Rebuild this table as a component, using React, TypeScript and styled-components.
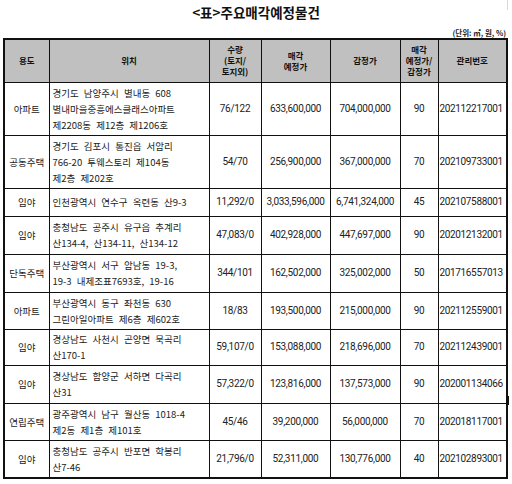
import styled, { createGlobalStyle } from "styled-components";

const GlobalStyle = createGlobalStyle`
  html, body {
    margin: 0;
    padding: 0;
    background: #fff;
  }
  body {
    font-family: "Noto Sans CJK KR", "Noto Sans", sans-serif;
    color: #1a1a1a;
  }
`;

const Page = styled.div`
  position: relative;
  width: 512px;
  height: 484px;
  overflow: hidden;
`;

const Title = styled.h1`
  margin: 0;
  padding-top: 3px;
  height: 24px;
  text-align: center;
  font-size: 13.5px;
  line-height: 18px;
  font-weight: 700;
  color: #111;
`;

const UnitNote = styled.div`
  height: 11px;
  padding-right: 6px;
  text-align: right;
  font-size: 7.5px;
  line-height: 11px;
  font-weight: 700;
  color: #222;
`;

const Table = styled.table`
  margin-left: 3px;
  width: 503px;
  table-layout: fixed;
  border-collapse: collapse;
  border: 2px solid #111;
`;

const HeadCell = styled.th`
  background: #c0c0c0;
  border: 1px solid #111;
  padding: 0;
  text-align: center;
  vertical-align: middle;
  font-size: 8.5px;
  line-height: 11px;
  font-weight: 700;
  color: #111;
`;

const Row = styled.tr<{ $h: number }>`
  height: ${(p) => p.$h}px;
`;

const Cell = styled.td<{ $align?: string; $num?: boolean }>`
  border: 1px solid #111;
  padding: ${(p) => (p.$align === "left" ? "0 0 0 3px" : "0")};
  text-align: ${(p) => p.$align || "center"};
  vertical-align: middle;
  white-space: nowrap;
  overflow: visible;
  color: #222;
  ${(p) =>
    p.$num
      ? `font-family: Roboto, "Noto Sans", sans-serif;
         font-size: 10px;
         letter-spacing: -0.3px;`
      : `font-size: 9.5px;
         word-spacing: 3px;`}
  line-height: 16px;
`;

const IdCell = styled(Cell)`
  text-align: left;
  padding-left: 1px;
  letter-spacing: -0.35px;
`;

const Tick = styled.div`
  position: absolute;
  left: 507px;
  top: 396px;
  width: 2px;
  height: 9px;
  background: #111;
`;

const EdgeLine = styled.div`
  position: absolute;
  left: 507px;
  top: 0;
  width: 1px;
  height: 10px;
  background: #d8d8d8;
`;

type Item = {
  use: string;
  loc: string[];
  qty: string;
  sale: string;
  appr: string;
  ratio: string;
  id: string;
  h: number;
};

const items: Item[] = [
  {
    use: "아파트",
    loc: ["경기도 남양주시 별내동 608", "별내마을중흥에스클래스아파트", "제2208동 제12층 제1206호"],
    qty: "76/122",
    sale: "633,600,000",
    appr: "704,000,000",
    ratio: "90",
    id: "202112217001",
    h: 53,
  },
  {
    use: "공동주택",
    loc: ["경기도 김포시 통진읍 서암리", "766-20 투웨스토리 제104동", "제2층 제202호"],
    qty: "54/70",
    sale: "256,900,000",
    appr: "367,000,000",
    ratio: "70",
    id: "202109733001",
    h: 53,
  },
  {
    use: "임야",
    loc: ["인천광역시 연수구 옥련동 산9-3"],
    qty: "11,292/0",
    sale: "3,033,596,000",
    appr: "6,741,324,000",
    ratio: "45",
    id: "202107588001",
    h: 28,
  },
  {
    use: "임야",
    loc: ["충청남도 공주시 유구읍 추계리", "산134-4, 산134-11, 산134-12"],
    qty: "47,083/0",
    sale: "402,928,000",
    appr: "447,697,000",
    ratio: "90",
    id: "202012132001",
    h: 38,
  },
  {
    use: "단독주택",
    loc: ["부산광역시 서구 암남동 19-3,", "19-3 내제조표7693호, 19-16"],
    qty: "344/101",
    sale: "162,502,000",
    appr: "325,002,000",
    ratio: "50",
    id: "201716557013",
    h: 38,
  },
  {
    use: "아파트",
    loc: ["부산광역시 동구 좌천동 630", "그린아일아파트 제6층 제602호"],
    qty: "18/83",
    sale: "193,500,000",
    appr: "215,000,000",
    ratio: "90",
    id: "202112559001",
    h: 37,
  },
  {
    use: "임야",
    loc: ["경상남도 사천시 곤양면 묵곡리", "산170-1"],
    qty: "59,107/0",
    sale: "153,088,000",
    appr: "218,696,000",
    ratio: "70",
    id: "202112439001",
    h: 36,
  },
  {
    use: "임야",
    loc: ["경상남도 함양군 서하면 다곡리", "산31"],
    qty: "57,322/0",
    sale: "123,816,000",
    appr: "137,573,000",
    ratio: "90",
    id: "202001134066",
    h: 38,
  },
  {
    use: "연립주택",
    loc: ["광주광역시 남구 월산동 1018-4", "제2동 제1층 제101호"],
    qty: "45/46",
    sale: "39,200,000",
    appr: "56,000,000",
    ratio: "70",
    id: "202018117001",
    h: 37,
  },
  {
    use: "임야",
    loc: ["충청남도 공주시 반포면 학봉리", "산7-46"],
    qty: "21,796/0",
    sale: "52,311,000",
    appr: "130,776,000",
    ratio: "40",
    id: "202102893001",
    h: 38,
  },
];

const colWidths = [45, 160, 52, 69, 70, 38, 69];

function App() {
  return (
    <Page>
      <GlobalStyle />
      <Title>&lt;표&gt;주요매각예정물건</Title>
      <UnitNote>(단위: ㎡, 원, %)</UnitNote>
      <Table>
        <colgroup>
          {colWidths.map((w, i) => (
            <col key={i} style={{ width: w }} />
          ))}
        </colgroup>
        <thead>
          <Row $h={43}>
            <HeadCell>용도</HeadCell>
            <HeadCell>위치</HeadCell>
            <HeadCell>
              수량
              <br />
              (토지/
              <br />
              토지외)
            </HeadCell>
            <HeadCell>
              매각
              <br />
              예정가
            </HeadCell>
            <HeadCell>감정가</HeadCell>
            <HeadCell>
              매각
              <br />
              예정가/
              <br />
              감정가
            </HeadCell>
            <HeadCell>관리번호</HeadCell>
          </Row>
        </thead>
        <tbody>
          {items.map((it) => (
            <Row key={it.id} $h={it.h}>
              <Cell>{it.use}</Cell>
              <Cell $align="left">
                {it.loc.map((l, i) => (
                  <div key={i}>{l}</div>
                ))}
              </Cell>
              <Cell $num>{it.qty}</Cell>
              <Cell $num>{it.sale}</Cell>
              <Cell $num>{it.appr}</Cell>
              <Cell $num>{it.ratio}</Cell>
              <IdCell $num>{it.id}</IdCell>
            </Row>
          ))}
        </tbody>
      </Table>
      <EdgeLine />
      <Tick />
    </Page>
  );
}

export default App;
